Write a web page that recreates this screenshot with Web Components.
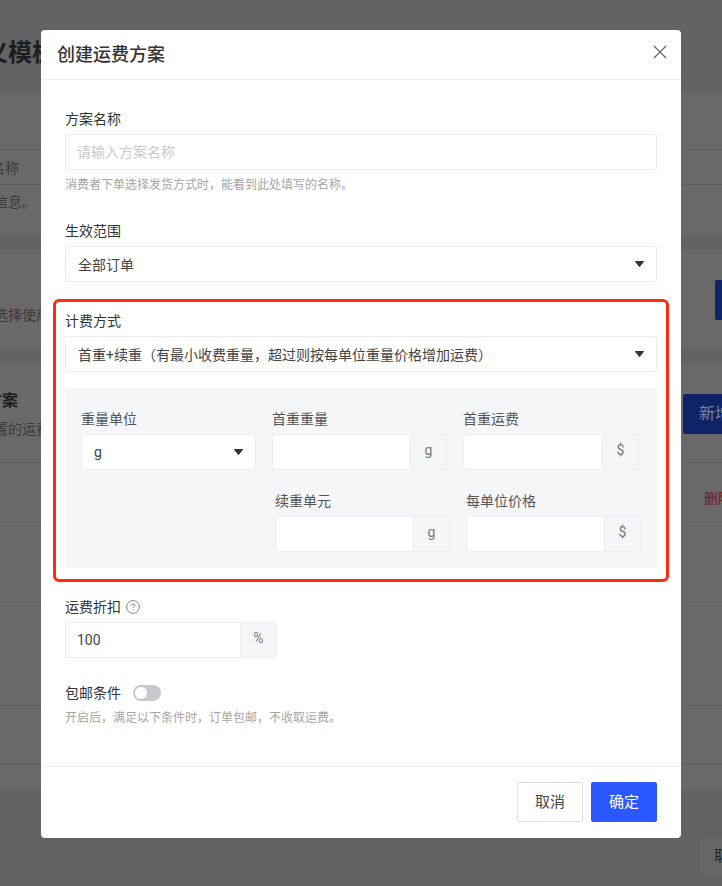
<!DOCTYPE html>
<html lang="zh">
<head>
<meta charset="utf-8">
<title>创建运费方案</title>
<style>
  html, body { margin: 0; height: 100%; }
  body {
    width: 722px;
    height: 886px;
    overflow: hidden;
    font-family: Roboto, "Noto Sans CJK SC", sans-serif;
    color: #333;
  }
</style>
</head>
<body>
<page-backdrop></page-backdrop>
<modal-dialog heading="创建运费方案">
  <form-field label="方案名称" hint="消费者下单选择发货方式时，能看到此处填写的名称。" gap="27">
    <text-box placeholder="请输入方案名称"></text-box>
  </form-field>
  <form-field label="生效范围" gap="17">
    <select-box value="全部订单"></select-box>
  </form-field>
  <highlight-box>
    <form-field label="计费方式" gap="16">
      <select-box value="首重+续重（有最小收费重量，超过则按每单位重量价格增加运费）"></select-box>
    </form-field>
    <price-panel></price-panel>
  </highlight-box>
  <form-field label="运费折扣" help gap="25">
    <text-box value="100" unit="%" style="width:212px"></text-box>
  </form-field>
  <form-field label="包邮条件" toggle hint="开启后，满足以下条件时，订单包邮，不收取运费。"></form-field>
  <action-button slot="footer">取消</action-button>
  <action-button slot="footer" primary>确定</action-button>
</modal-dialog>

<script>
const FONT = 'Roboto, "Noto Sans CJK SC", sans-serif';

class PageBackdrop extends HTMLElement {
  connectedCallback() {
    const root = this.attachShadow({ mode: "open" });
    root.innerHTML = `
      <style>
        :host { display: block; height: 886px; background: #636365; overflow: hidden; font-family: ${FONT}; }
        .title { height: 93px; box-sizing: border-box; padding-top: 38px; margin-left: -16px; font-size: 24px; font-weight: 700; color: #1d1d1e; line-height: 30px; white-space: nowrap; }
        .card { background: #696969; color: #3a3a3a; }
        .gap15 { margin-bottom: 15px; }
        .gap16 { margin-bottom: 16px; }
        .row { display: flex; justify-content: space-between; align-items: flex-start; border-bottom: 1px solid #5e5e5e; box-sizing: border-box; white-space: nowrap; }
        .row.faint { border-color: #656565; }
        .row.plain { border: 0; }
        .small { font-size: 14px; line-height: 20px; }
        .new { background: #0f2366; color: #7b84a3; width: 80px; height: 40px; margin-top: 30px; border-radius: 2px; font-size: 16px; line-height: 40px; padding-left: 16px; box-sizing: border-box; flex: none; }
        .del { color: #6b2020; font-size: 14px; line-height: 20px; margin: 25px -12px 0 0; width: 30px; }
        .back { display: flex; justify-content: flex-end; padding-top: 24px; }
        .cancel { width: 60px; height: 39px; margin-right: -36px; box-sizing: border-box; background: #666; border: 1px solid #5e5e5e; color: #222; font-size: 15px; line-height: 37px; padding-left: 15px; }
      </style>
      <div class="title">义模板</div>
      <div class="card gap15" style="height:142px">
        <div class="row" style="height:57px"></div>
        <div class="row small" style="height:35px;margin-left:-9px;padding-top:8px">名称</div>
        <div class="row small plain" style="height:34px;margin-left:-6px;padding-top:7px">信息。</div>
      </div>
      <div class="card gap16" style="height:98px">
        <div class="row small plain" style="height:98px;margin-left:-6px">
          <span style="margin-top:55px">选择使用</span>
          <span class="new" style="margin-right:-73px">&nbsp;</span>
        </div>
      </div>
      <div class="card" style="height:425px">
        <div class="row" style="height:99px">
          <div>
            <div style="font-size:16px;font-weight:700;color:#1d1d1e;margin:27px 0 8px -14px;line-height:20px">方案</div>
            <div class="small" style="margin-left:-6px">置的运费</div>
          </div>
          <span class="new" style="margin-right:-41px">新增</span>
        </div>
        <div class="row faint" style="height:60px;justify-content:flex-end"><span class="del">删除</span></div>
        <div class="row faint" style="height:80px"></div>
        <div class="row" style="height:103px"></div>
        <div class="row" style="height:59px"></div>
      </div>
      <div class="row" style="height:24px"></div>
      <div class="back"><span class="cancel">取消</span></div>`;
  }
}

class ModalDialog extends HTMLElement {
  connectedCallback() {
    const root = this.attachShadow({ mode: "open" });
    root.innerHTML = `
      <style>
        :host { display: flex; flex-direction: column; position: absolute; left: 41px; top: 30px; width: 640px; height: 808px; background: #fff; border-radius: 4px; font-family: ${FONT}; }
        header { height: 49px; flex: none; border-bottom: 1px solid #ebedf0; display: flex; justify-content: space-between; padding: 0 14px 0 16px; }
        h1 { margin: 0; font-size: 18px; font-weight: 500; line-height: 50px; color: #333; }
        svg { margin-top: 15px; }
        main { flex: 1; padding: 29px 24px 0; display: flex; flex-direction: column; }
        footer { height: 72px; box-sizing: border-box; flex: none; border-top: 1px solid #ebedf0; display: flex; justify-content: flex-end; gap: 8px; padding: 15px 24px 0; }
      </style>
      <header>
        <h1>${this.getAttribute("heading")}</h1>
        <svg width="14" height="14" viewBox="0 0 14 14" fill="none" stroke="#666" stroke-width="1.3"><path d="M1 1l12 12M13 1L1 13"/></svg>
      </header>
      <main><slot></slot></main>
      <footer><slot name="footer"></slot></footer>`;
  }
}

class FormField extends HTMLElement {
  connectedCallback() {
    const root = this.attachShadow({ mode: "open" });
    const help = this.hasAttribute("help")
      ? `<svg width="14" height="14" viewBox="0 0 15 15" fill="none" stroke="#777"><circle cx="7.5" cy="7.5" r="6.8"/><path d="M5.6 6c0-1 .8-1.8 1.9-1.8s1.9.7 1.9 1.7c0 1.4-1.9 1.4-1.9 2.9"/><path d="M7.5 10.2v1.1"/></svg>`
      : "";
    const toggle = this.hasAttribute("toggle") ? `<span class="sw"><i></i></span>` : "";
    const hint = this.getAttribute("hint");
    root.innerHTML = `
      <style>
        :host { display: block; margin-bottom: ${this.getAttribute("gap") || 0}px; font-family: ${FONT}; }
        .label { display: flex; align-items: center; gap: 5px; font-size: 14px; line-height: 20px; color: var(--label-color, #333); margin-bottom: 5px; height: 20px; }
        .sw { width: 28px; height: 16px; margin-left: 7px; border-radius: 8px; background: #c8c9cc; display: inline-flex; align-items: center; padding-left: 2px; box-sizing: border-box; }
        .sw i { width: 12px; height: 12px; border-radius: 50%; background: #fff; }
        .hint { font-size: 12px; line-height: 17px; color: #a5a5a5; margin-top: 7px; }
      </style>
      <div class="label"><span>${this.getAttribute("label")}</span>${help}${toggle}</div>
      <slot></slot>
      ${hint ? `<div class="hint">${hint}</div>` : ""}`;
  }
}

class TextBox extends HTMLElement {
  connectedCallback() {
    const root = this.attachShadow({ mode: "open" });
    const unit = this.getAttribute("unit");
    const value = this.getAttribute("value");
    const placeholder = this.getAttribute("placeholder");
    root.innerHTML = `
      <style>
        :host { display: flex; height: 36px; box-sizing: border-box; border: 1px solid #ebedf0; border-radius: 2px; background: #fff; font-size: 14px; font-family: ${FONT}; }
        .val { flex: 1; min-width: 0; padding-left: 11px; line-height: 35px; color: #444; }
        .ph { color: #c8c9cc; }
        .unit { width: 35px; flex: none; border-left: 1px solid #ebedf0; background: #f5f6f8; color: #777; text-align: center; line-height: 30px; }
      </style>
      <div class="val ${value ? "" : "ph"}">${value || placeholder || ""}</div>
      ${unit ? `<div class="unit">${unit}</div>` : ""}`;
  }
}

class SelectBox extends HTMLElement {
  connectedCallback() {
    const root = this.attachShadow({ mode: "open" });
    root.innerHTML = `
      <style>
        :host { display: flex; align-items: center; justify-content: space-between; height: 36px; box-sizing: border-box; border: 1px solid #ebedf0; border-radius: 2px; background: #fff; padding: 0 12px; font-size: 14px; color: #444; font-family: ${FONT}; }
        span { white-space: nowrap; }
        svg { flex: none; }
      </style>
      <span>${this.getAttribute("value")}</span>
      <svg width="9" height="6" viewBox="0 0 9 6"><path d="M0.5 0h8a.5.5 0 0 1 .4.8L4.9 5.8a.5.5 0 0 1-.8 0L.1.8A.5.5 0 0 1 .5 0z" fill="#333"/></svg>`;
  }
}

class HighlightBox extends HTMLElement {
  connectedCallback() {
    const root = this.attachShadow({ mode: "open" });
    root.innerHTML = `
      <style>
        :host { display: block; margin: 0 -12px 15px; padding: 9px 9px 11px; border: 3px solid #ff2a12; border-radius: 6px; }
      </style>
      <slot></slot>`;
  }
}

class PricePanel extends HTMLElement {
  connectedCallback() {
    const root = this.attachShadow({ mode: "open" });
    const cell = (label, unit) => `
      <form-field label="${label}"><text-box unit="${unit}"></text-box></form-field>`;
    root.innerHTML = `
      <style>
        :host { display: block; background: #f5f6f8; border-radius: 2px; padding: 21px 16px 16px; --label-color: #555; }
        .row { display: grid; grid-template-columns: 175px 175px 176px; column-gap: 16px; }
        .row + .row { margin-top: 21px; }
        .second { grid-template-columns: 175px 175px; justify-content: end; }
      </style>
      <div class="row">
        <form-field label="重量单位"><select-box value="g"></select-box></form-field>
        ${cell("首重重量", "g")}
        ${cell("首重运费", "$")}
      </div>
      <div class="row second">
        ${cell("续重单元", "g")}
        ${cell("每单位价格", "$")}
      </div>`;
  }
}

class ActionButton extends HTMLElement {
  connectedCallback() {
    const root = this.attachShadow({ mode: "open" });
    const primary = this.hasAttribute("primary");
    root.innerHTML = `
      <style>
        :host { display: block; width: 66px; height: 40px; box-sizing: border-box; border-radius: 2px; text-align: center; font-size: 15px; line-height: 38px; font-family: ${FONT};
          border: 1px solid ${primary ? "#2b57ff" : "#dcdee0"}; background: ${primary ? "#2b57ff" : "#fff"}; color: ${primary ? "#fff" : "#444"}; }
      </style>
      <slot></slot>`;
  }
}

customElements.define("page-backdrop", PageBackdrop);
customElements.define("modal-dialog", ModalDialog);
customElements.define("form-field", FormField);
customElements.define("text-box", TextBox);
customElements.define("select-box", SelectBox);
customElements.define("highlight-box", HighlightBox);
customElements.define("price-panel", PricePanel);
customElements.define("action-button", ActionButton);
</script>
</body>
</html>
